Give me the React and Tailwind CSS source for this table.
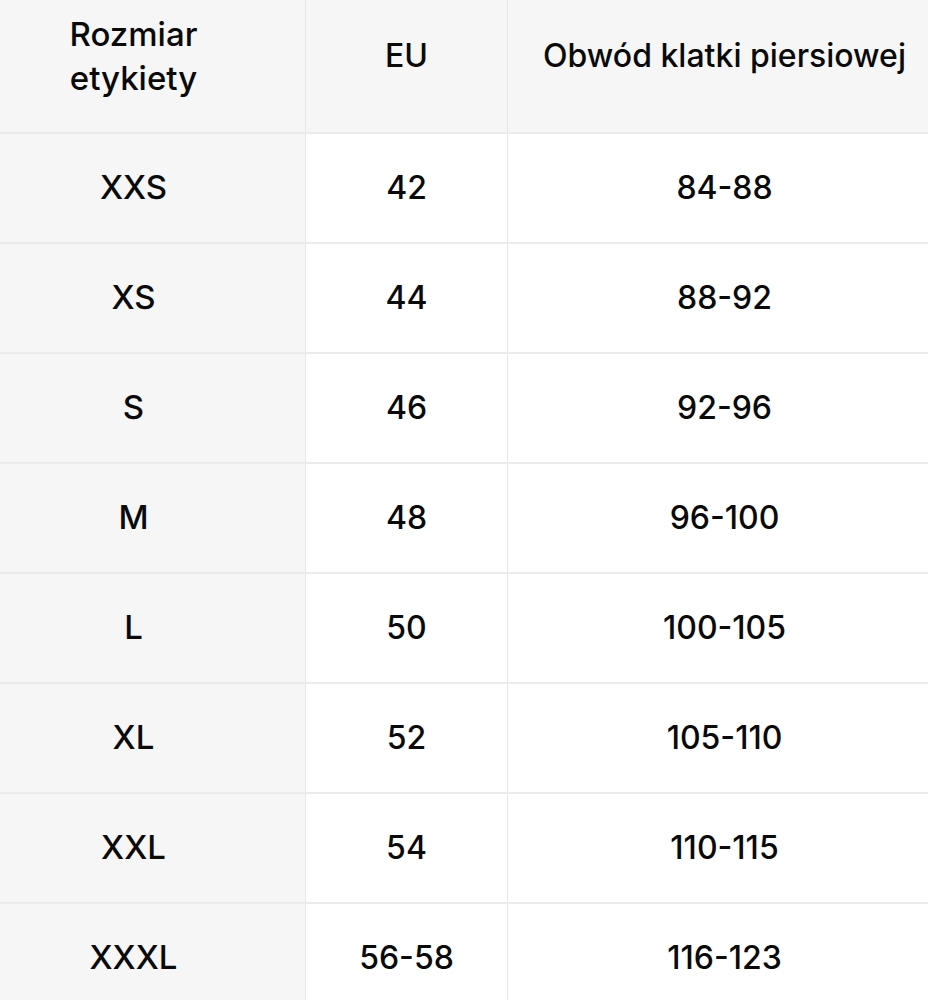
const rows = [
  ["XXS", "42", "84-88"],
  ["XS", "44", "88-92"],
  ["S", "46", "92-96"],
  ["M", "48", "96-100"],
  ["L", "50", "100-105"],
  ["XL", "52", "105-110"],
  ["XXL", "54", "110-115"],
  ["XXXL", "56-58", "116-123"],
];

const font = { fontFamily: "Inter, 'Noto Sans', sans-serif" };

export default function App() {
  return (
    <div className="w-[928px] h-[1000px] overflow-hidden bg-white text-[#0a0a0a] font-medium" style={font}>
      {/* header */}
      <div className="flex h-[134px] border-b-2 border-[#ebebeb] bg-[#f6f6f6]">
        <div className="w-[306px] border-r border-[#e6e6e6] flex items-center justify-center pr-[38px] pb-[20px] text-[33px] leading-[44px] text-center">
          Rozmiar
          <br />
          etykiety
        </div>
        <div className="w-[202px] border-r border-[#e6e6e6] flex items-center justify-center pb-[20px] text-[32px]">
          EU
        </div>
        <div className="flex-1 flex items-center justify-center pl-[13px] pb-[20px] text-[32px] whitespace-nowrap">
          Obwód klatki piersiowej
        </div>
      </div>

      {rows.map(([size, eu, chest]) => (
        <div key={size} className="flex h-[110px] border-b-2 border-[#ebebeb]">
          <div className="w-[306px] bg-[#f6f6f6] border-r border-[#e6e6e6] flex items-center justify-center pr-[38px] text-[33px]">
            {size}
          </div>
          <div className="w-[202px] border-r border-[#e6e6e6] flex items-center justify-center text-[32px]">
            {eu}
          </div>
          <div className="flex-1 flex items-center justify-center pl-[13px] text-[32px]">
            {chest}
          </div>
        </div>
      ))}
    </div>
  );
}
